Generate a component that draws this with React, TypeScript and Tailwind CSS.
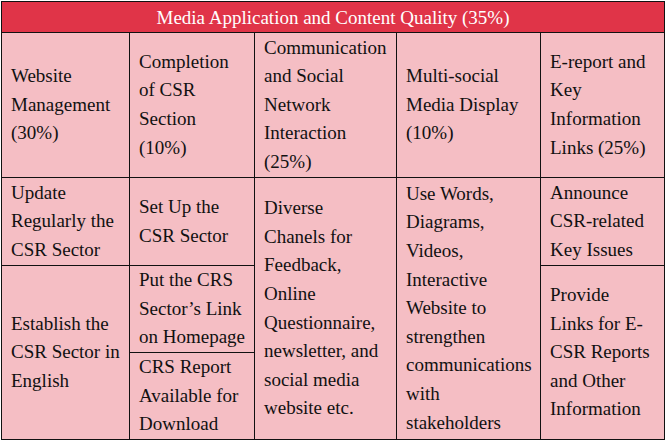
import React from "react";

const Cell = ({ lines, className = "" }: { lines: string[]; className?: string }) => (
  <div className={`bg-[#f5bec4] flex flex-col justify-center pl-[9px] pr-1 text-[19px] leading-[28.6px] text-[#111] ${className}`}>
    {lines.map((l, i) => (
      <span key={i} className="whitespace-nowrap">{l}</span>
    ))}
  </div>
);

export default function App() {
  return (
    <div className="w-[669px] h-[443px] bg-white pt-px pl-px" style={{ fontFamily: '"Liberation Serif", "Times New Roman", serif' }}>
      <div className="grid grid-cols-[127px_124px_141px_143px_123px] grid-rows-[30px_144px_87px_86px_86px] gap-px bg-[#111] p-px w-max">
        <div className="col-span-5 bg-[#e03448] text-white text-[19px] flex items-center justify-center leading-none">
          Media Application and Content Quality (35%)
        </div>
        <Cell lines={["Website", "Management", "(30%)"]} />
        <Cell lines={["Completion", "of CSR", "Section", "(10%)"]} />
        <Cell lines={["Communication", "and Social", "Network", "Interaction", "(25%)"]} />
        <Cell lines={["Multi-social", "Media Display", "(10%)"]} />
        <Cell lines={["E-report and", "Key", "Information", "Links (25%)"]} />

        <Cell className="col-start-1 row-start-3" lines={["Update", "Regularly the", "CSR Sector"]} />
        <Cell className="col-start-1 row-start-4 row-span-2" lines={["Establish the", "CSR Sector in", "English"]} />
        <Cell className="col-start-2 row-start-3" lines={["Set Up the", "CSR Sector"]} />
        <Cell className="col-start-2 row-start-4" lines={["Put the CRS", "Sector\u2019s Link", "on Homepage"]} />
        <Cell className="col-start-2 row-start-5" lines={["CRS Report", "Available for", "Download"]} />
        <Cell
          className="col-start-3 row-start-3 row-span-3"
          lines={["Diverse", "Chanels for", "Feedback,", "Online", "Questionnaire,", "newsletter, and", "social media", "website etc."]}
        />
        <Cell
          className="col-start-4 row-start-3 row-span-3"
          lines={["Use Words,", "Diagrams,", "Videos,", "Interactive", "Website to", "strengthen", "communications", "with", "stakeholders"]}
        />
        <Cell className="col-start-5 row-start-3" lines={["Announce", "CSR-related", "Key Issues"]} />
        <Cell className="col-start-5 row-start-4 row-span-2" lines={["Provide", "Links for E-", "CSR Reports", "and Other", "Information"]} />
      </div>
    </div>
  );
}
